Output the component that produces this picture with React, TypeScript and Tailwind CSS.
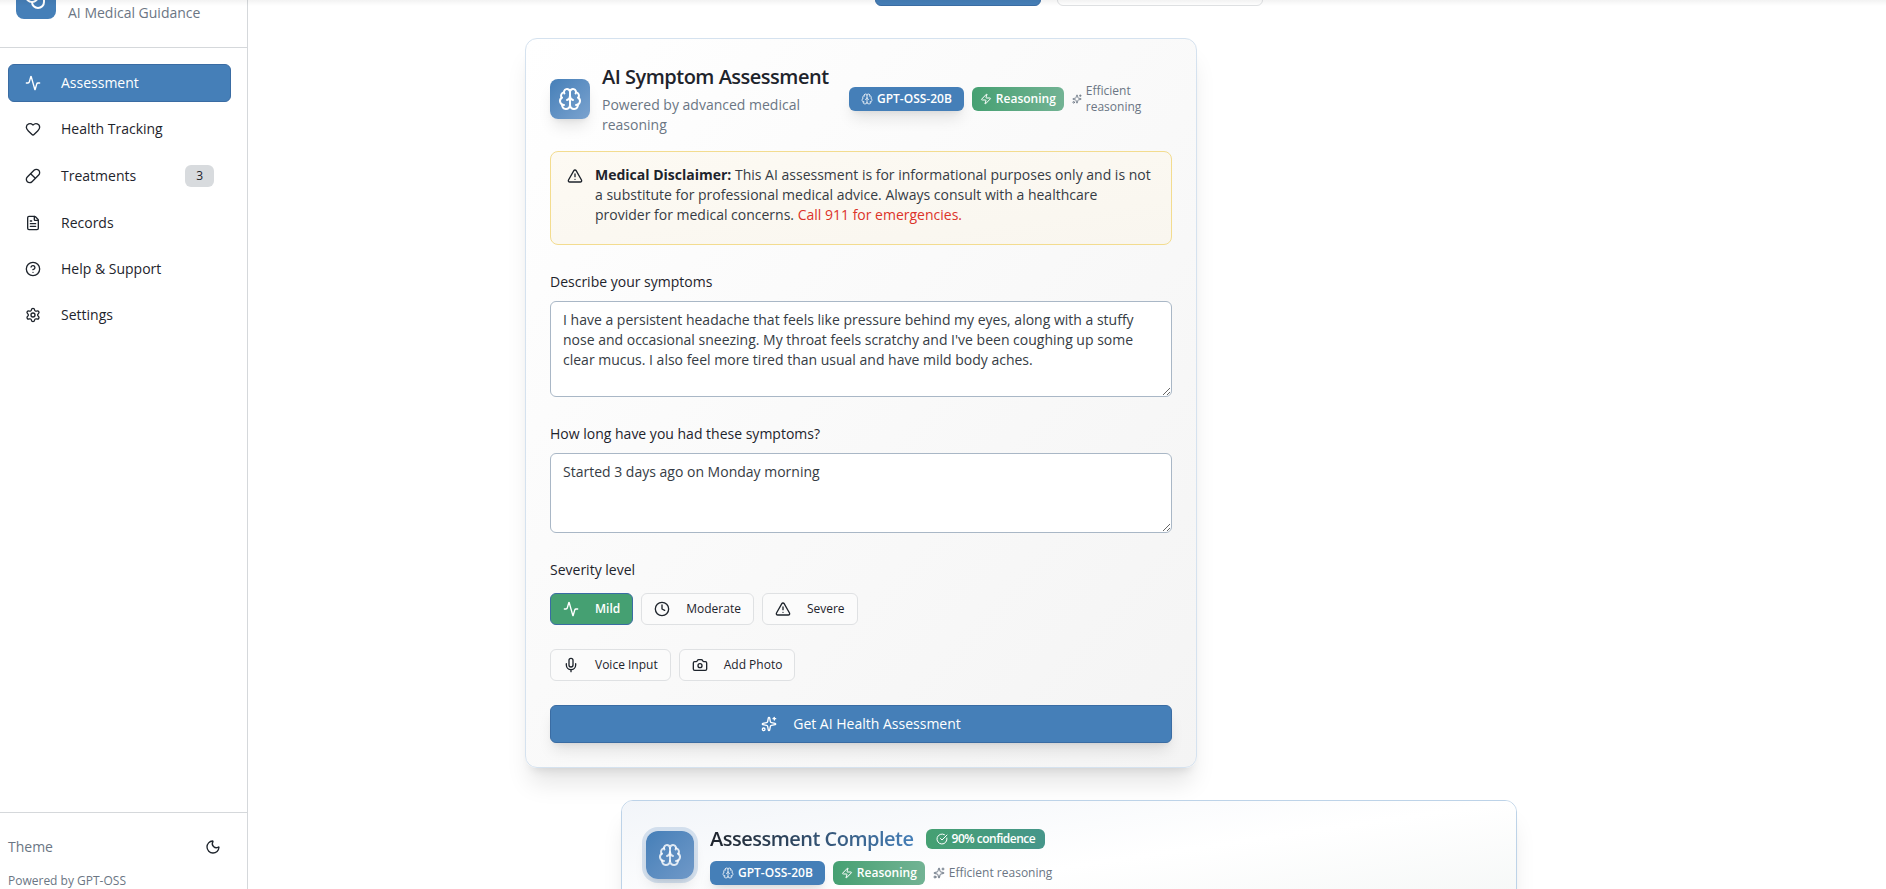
import { useState } from 'react';
import {
  Activity,
  Brain,
  Camera,
  CircleCheckBig,
  CircleHelp,
  Clock,
  FileText,
  Heart,
  Mic,
  Moon,
  Pill,
  Settings,
  Sparkles,
  Stethoscope,
  TriangleAlert,
  Zap,
} from 'lucide-react';
import clsx from 'clsx';

const navItems = [
  { id: 'assessment', label: 'Assessment', icon: Activity },
  { id: 'tracking', label: 'Health Tracking', icon: Heart },
  { id: 'treatments', label: 'Treatments', icon: Pill, badge: 3 },
  { id: 'records', label: 'Records', icon: FileText },
  { id: 'help', label: 'Help & Support', icon: CircleHelp },
  { id: 'settings', label: 'Settings', icon: Settings },
];

const severities = [
  { id: 'mild', label: 'Mild', icon: Activity },
  { id: 'moderate', label: 'Moderate', icon: Clock },
  { id: 'severe', label: 'Severe', icon: TriangleAlert },
];

function ModelBadges() {
  return (
    <div className="flex min-w-0 items-center gap-2">
      <span className="flex h-6 shrink-0 items-center gap-1 rounded-md bg-[#457fb8] px-3 text-xs font-semibold text-white shadow-lg shadow-black/10">
        <Brain size={12} className="opacity-80" /> GPT-OSS-20B
      </span>
      <span className="flex h-6 shrink-0 items-center gap-1 rounded-md bg-linear-to-r from-[#45a072] to-[#72b394] px-2 text-xs font-semibold text-white">
        <Zap size={12} /> Reasoning
      </span>
      <span className="flex items-center gap-1 text-xs text-[#6b7684]">
        <Sparkles size={12} />
        <span>Efficient reasoning</span>
      </span>
    </div>
  );
}

function Sidebar() {
  const [active, setActive] = useState('assessment');

  return (
    <aside className="flex w-[248px] shrink-0 flex-col border-r border-[#d5d8db] bg-white">
      {/* Brand, scrolled partly out of view */}
      <div className="-mt-[21px] flex items-start gap-3 border-b border-[#d5d8db] px-4 pb-6">
        <div className="flex size-10 items-center justify-center rounded-lg bg-[#457fb8] text-white">
          <Stethoscope size={24} />
        </div>
        <div className="pt-6 text-sm text-[#6b7684]">AI Medical Guidance</div>
      </div>

      <nav className="flex flex-1 flex-col gap-2 py-4 pr-4 pl-2">
        {navItems.map(({ id, label, icon: Icon, badge }) => (
          <button
            key={id}
            onClick={() => setActive(id)}
            className={clsx(
              'flex items-center gap-5 rounded-md border px-4 py-2 text-left text-sm font-medium',
              active === id ? 'border-[#3a6ca3] bg-[#457fb8] text-white' : 'border-transparent text-[#1e242c]'
            )}
          >
            <Icon size={16} />
            <span className="flex-1">{label}</span>
            {badge && <span className="rounded-md bg-[#d8dbde] px-[11px] py-[3px] text-xs">{badge}</span>}
          </button>
        ))}
      </nav>

      <div className="h-[77px] shrink-0 border-t border-[#d5d8db] pt-4 pr-4 pl-2">
        <div className="flex h-9 items-center justify-between text-sm text-[#6b7684]">
          Theme
          <button aria-label="Toggle theme" className="px-2.5 text-[#1e242c]">
            <Moon size={16} />
          </button>
        </div>
        <p className="mt-2 text-xs text-[#6b7684]">Powered by GPT-OSS</p>
      </div>
    </aside>
  );
}

function SymptomForm() {
  const [symptoms, setSymptoms] = useState(
    "I have a persistent headache that feels like pressure behind my eyes, along with a stuffy nose and occasional sneezing. My throat feels scratchy and I've been coughing up some clear mucus. I also feel more tired than usual and have mild body aches."
  );
  const [duration, setDuration] = useState('Started 3 days ago on Monday morning');
  const [severity, setSeverity] = useState('mild');

  return (
    <section className="w-full max-w-2xl rounded-xl border border-[#d5e2ef] bg-linear-to-br from-white to-[#f4f4f4] p-6 shadow-xl">
      <div className="flex items-center gap-4">
        <div className="flex w-[283px] shrink-0 items-center gap-3">
          <div className="flex size-10 shrink-0 items-center justify-center rounded-lg bg-linear-to-br from-[#457fb8] to-[#7ba3cf] text-white shadow-lg shadow-black/10">
            <Brain size={24} />
          </div>
          <div>
            <h2 className="text-xl font-semibold tracking-tight">AI Symptom Assessment</h2>
            <p className="mt-1 text-sm text-[#6b7684]">Powered by advanced medical reasoning</p>
          </div>
        </div>
        <ModelBadges />
      </div>

      <div role="alert" className="mt-4 flex gap-3 rounded-lg border border-[#f3dc8f] bg-linear-to-br from-[#fdfaf3] to-[#f9f6ef] px-4 pt-[13px] pb-[19px] text-sm text-[#363c44]">
        <TriangleAlert size={16} className="mt-[3px] shrink-0 text-[#1e242c]" />
        <p>
          <strong className="font-bold text-[#1e242c]">Medical Disclaimer:</strong> This AI assessment is for informational
          purposes only and is not a substitute for professional medical advice. Always consult with a healthcare
          provider for medical concerns. <span className="font-medium text-[#dc3329]">Call 911 for emergencies.</span>
        </p>
      </div>

      <div className="mt-6">
        <div className="mb-2">
          <label htmlFor="symptoms" className="text-sm font-medium">Describe your symptoms</label>
        </div>
        <textarea
          id="symptoms"
          value={symptoms}
          onChange={e => setSymptoms(e.target.value)}
          className="block h-24 w-full rounded-md border border-[#a9b7c6] bg-white px-3 py-2 text-sm text-[#363c44]"
        />
      </div>

      <div className="mt-6">
        <div className="mb-2">
          <label htmlFor="duration" className="text-sm font-medium">How long have you had these symptoms?</label>
        </div>
        <textarea
          id="duration"
          value={duration}
          onChange={e => setDuration(e.target.value)}
          className="block h-20 w-full rounded-md border border-[#a9b7c6] bg-white px-3 py-2 text-sm text-[#363c44]"
        />
      </div>

      <div className="mt-6">
        <div className="mb-3">
          <span id="severity" className="text-sm font-medium">Severity level</span>
        </div>
        <div role="group" aria-labelledby="severity" className="flex gap-2">
          {severities.map(({ id, label, icon: Icon }) => (
            <button
              key={id}
              onClick={() => setSeverity(id)}
              className={clsx(
                'flex h-8 items-center gap-4 rounded-md border px-3 text-xs',
                severity === id
                  ? 'border-[#3a6ca3] bg-[#45a072] font-semibold text-white'
                  : 'border-[#dfe1e3] bg-[#fbfbfb] font-medium'
              )}
            >
              <Icon size={16} /> {label}
            </button>
          ))}
        </div>
      </div>

      <div className="mt-6 flex gap-2">
        <button className="flex h-8 items-center gap-4 rounded-md border border-[#dfe1e3] bg-[#fbfbfb] px-3 text-xs font-medium">
          <Mic size={16} /> Voice Input
        </button>
        <button className="flex h-8 items-center gap-4 rounded-md border border-[#dfe1e3] bg-[#fbfbfb] px-3 text-xs font-medium">
          <Camera size={16} /> Add Photo
        </button>
      </div>

      <button className="mt-6 flex w-full items-center justify-center gap-4 rounded-md border border-[#3a6ca3] bg-[#457fb8] py-2 text-sm font-medium text-white shadow-lg">
        <Sparkles size={16} /> Get AI Health Assessment
      </button>
    </section>
  );
}

function AssessmentResult() {
  return (
    <section className="mx-auto w-full max-w-4xl overflow-hidden rounded-xl border border-[#bdd3e8] bg-white shadow-xl">
      <div className="flex h-[132px] items-start gap-4 bg-linear-to-br from-[#f2f5f9] via-white to-[#f2f5f4] p-6">
        <div className="mt-[6px] flex size-12 shrink-0 items-center justify-center rounded-xl bg-linear-to-br from-[#457fb8] to-[#7099c8] text-white/80 shadow-lg ring-4 ring-[#457fb8]/20">
          <Brain size={24} />
        </div>
        <div>
          <h2 className="flex items-center gap-3 text-xl font-semibold tracking-tight">
            <span className="bg-linear-to-r from-[#1e242c] to-[#457fb8] bg-clip-text text-transparent">
              Assessment Complete
            </span>
            <span className="flex h-5 items-center gap-1 rounded-md bg-linear-to-r from-[#45a072] to-[#46968a] px-2.5 text-xs text-white">
              <CircleCheckBig size={12} /> 90% confidence
            </span>
          </h2>
          <div className="mt-2">
            <ModelBadges />
          </div>
        </div>
      </div>
    </section>
  );
}

export default function App() {
  return (
    <div className="relative flex h-screen overflow-hidden bg-white font-['Open_Sans','Noto_Sans',sans-serif] text-[#1e242c]">
      <div className="absolute inset-x-0 top-0 z-10 h-1.5 bg-linear-to-b from-black/5 to-transparent" />
      <Sidebar />
      <main className="min-w-0 flex-1 overflow-hidden pl-1">
        <div className="mx-auto max-w-6xl px-8">
          <div className="-mt-8 mb-8 flex justify-center gap-4">
            <button aria-label="New assessment" className="h-[38px] w-[166px] rounded-md border border-[#3a6ca3] bg-[#457fb8]" />
            <button aria-label="Health history" className="h-[38px] w-[206px] rounded-md border border-[#dfe1e3] bg-white" />
          </div>
          <div className="flex flex-col gap-8">
            <SymptomForm />
            <AssessmentResult />
          </div>
        </div>
      </main>
    </div>
  );
}
